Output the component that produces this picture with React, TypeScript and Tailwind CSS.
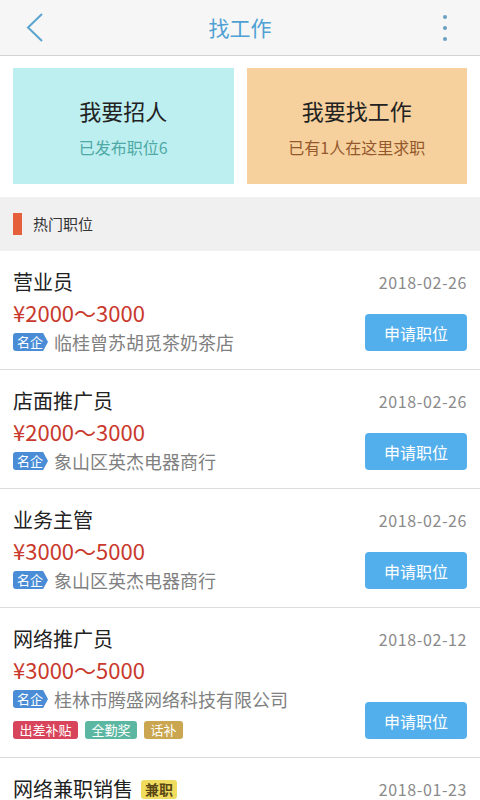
import React from 'react';

interface Job {
  title: string;
  salary: string;
  company: string;
  date: string;
  perks?: { label: string; color: string }[];
  partTime?: boolean;
}

const jobs: Job[] = [
  { title: '营业员', salary: '¥2000～3000', company: '临桂曾苏胡觅茶奶茶店', date: '2018-02-26' },
  { title: '店面推广员', salary: '¥2000～3000', company: '象山区英杰电器商行', date: '2018-02-26' },
  { title: '业务主管', salary: '¥3000～5000', company: '象山区英杰电器商行', date: '2018-02-26' },
  {
    title: '网络推广员',
    salary: '¥3000～5000',
    company: '桂林市腾盛网络科技有限公司',
    date: '2018-02-12',
    perks: [
      { label: '出差补贴', color: 'bg-[#d8445b]' },
      { label: '全勤奖', color: 'bg-[#5cb7a2]' },
      { label: '话补', color: 'bg-[#c9a64f]' },
    ],
  },
  { title: '网络兼职销售', salary: '¥2000～4000', company: '桂林市腾盛网络科技有限公司', date: '2018-01-23', partTime: true },
];

function JobRow({ job }: { job: Job }) {
  return (
    <div className="flex bg-white px-[13px] pt-[16px] pb-[12px] border-b border-[#dcdcdc]">
      <div className="flex-1 min-w-0">
        <div className="flex items-center h-[30px]">
          <span className="text-[20px] text-[#222]">{job.title}</span>
          {job.partTime && (
            <span className="ml-[8px] h-[19px] px-[4px] rounded-[3px] bg-[#f0dc5e] text-[14px] leading-[19px] font-bold text-[#5a4716]">
              兼职
            </span>
          )}
        </div>
        <div className="h-[30px] leading-[30px] text-[22px] text-[#c9392d]">{job.salary}</div>
        <div className="flex items-center h-[30px]">
          <span className="h-[18px] w-[35px] pl-[4px] rounded-l-[3px] bg-[#4a8dd6] text-white text-[13px] leading-[18px] [clip-path:polygon(0_0,86%_0,100%_50%,86%_100%,0_100%)]">
            名企
          </span>
          <span className="ml-[6px] text-[18px] text-[#808080] truncate">{job.company}</span>
        </div>
        {job.perks && (
          <div className="flex items-center gap-[7px] h-[31px]">
            {job.perks.map((p) => (
              <span
                key={p.label}
                className={`${p.color} h-[18px] px-[6.5px] rounded-[3px] text-white text-[13px] leading-[18px]`}
              >
                {p.label}
              </span>
            ))}
          </div>
        )}
      </div>
      <div className="flex flex-col items-end justify-between shrink-0">
        <div className="h-[30px] leading-[30px] text-[16px] tracking-[0.6px] text-[#8a8a8a]">{job.date}</div>
        <button className="mb-[6px] w-[102px] h-[37px] rounded-[4px] bg-[#52afeb] text-white text-[16px]">
          申请职位
        </button>
      </div>
    </div>
  );
}

export default function App() {
  return (
    <div className="w-[480px] h-[800px] overflow-hidden bg-white font-['Noto_Sans_CJK_SC',sans-serif]">
      {/* header */}
      <div className="relative h-[56px] bg-[#f6f6f6] border-b border-[#d2d2d2] flex items-center justify-center">
        <svg className="absolute left-[24px] top-[12px]" width="22" height="32" viewBox="0 0 22 32">
          <polyline points="18,2 4,15.5 18,29" fill="none" stroke="#5aa4cf" strokeWidth="2" />
        </svg>
        <span className="text-[21px] text-[#4fa1d4]">找工作</span>
        <div className="absolute right-[33px] top-[15px] flex flex-col gap-[7px]">
          <span className="w-[4px] h-[4px] rounded-full bg-[#6a9fc0]" />
          <span className="w-[4px] h-[4px] rounded-full bg-[#6a9fc0]" />
          <span className="w-[4px] h-[4px] rounded-full bg-[#6a9fc0]" />
        </div>
      </div>

      {/* entry cards */}
      <div className="flex gap-[13px] px-[13px] pt-[12px] pb-[13px]">
        <div className="flex-1 h-[116px] bg-[#bdeff0] flex flex-col items-center justify-center">
          <div className="text-[22px] text-[#222]">我要招人</div>
          <div className="mt-[8px] text-[16px] text-[#4fa9a6]">已发布职位6</div>
        </div>
        <div className="flex-1 h-[116px] bg-[#f6d09d] flex flex-col items-center justify-center">
          <div className="text-[22px] text-[#222]">我要找工作</div>
          <div className="mt-[8px] text-[16px] text-[#94582c]">已有1人在这里求职</div>
        </div>
      </div>

      {/* section title */}
      <div className="h-[54px] bg-[#f0f0f0] flex items-center px-[13px]">
        <span className="w-[9px] h-[22px] bg-[#e5603a]" />
        <span className="ml-[11px] text-[15px] text-[#333]">热门职位</span>
      </div>

      {jobs.map((job) => (
        <JobRow key={job.title} job={job} />
      ))}
    </div>
  );
}
